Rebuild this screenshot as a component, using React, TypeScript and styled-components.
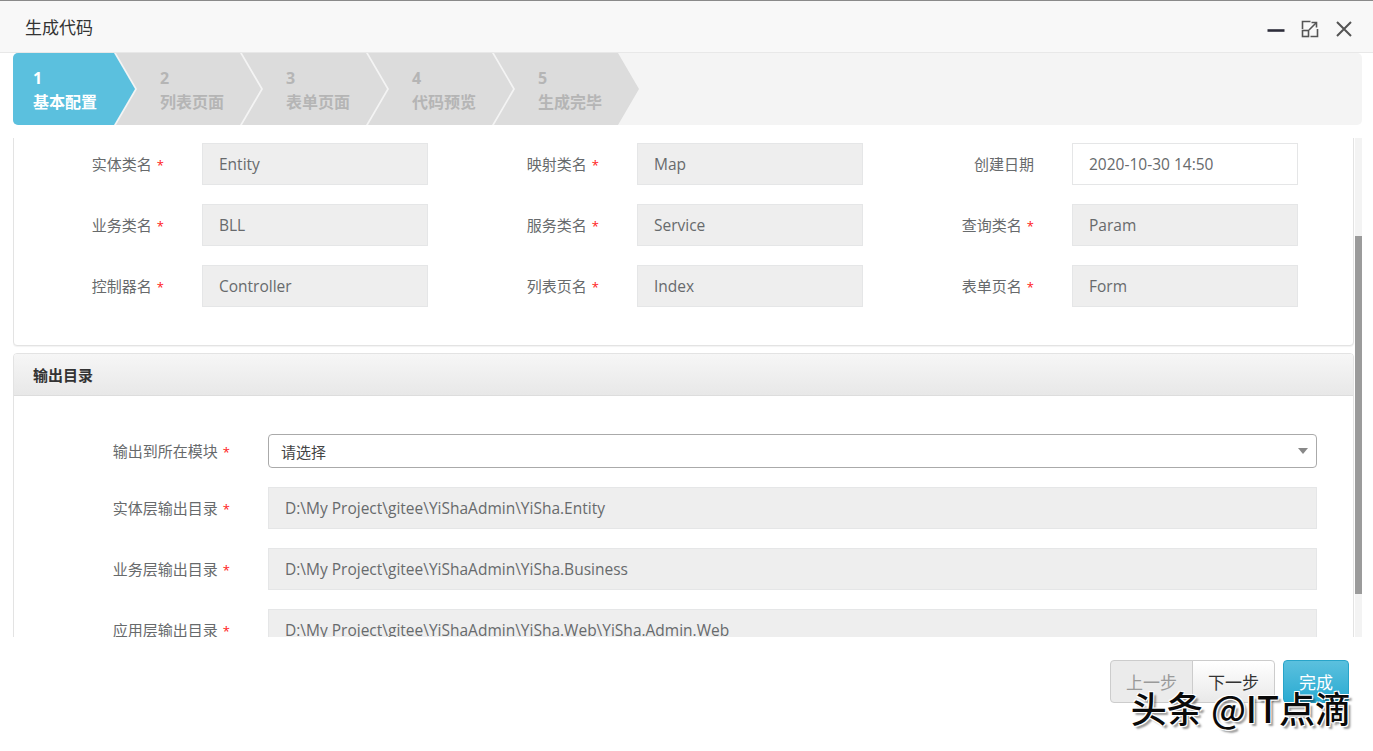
import React, { useLayoutEffect, useRef, useState } from 'react';
import styled, { createGlobalStyle } from 'styled-components';

const GlobalStyle = createGlobalStyle`
  html, body {
    margin: 0;
    padding: 0;
    background: #ffffff;
  }
  body {
    font-family: 'Open Sans', 'Noto Sans CJK SC', sans-serif;
  }
  * {
    box-sizing: border-box;
  }
`;

type Field = { label: string; value: string; required?: boolean; editable?: boolean };

const hiddenRow: Field[] = [
  { label: '数据表名', value: 'SysDemo', required: true },
  { label: '表描述', value: '示例' },
  { label: '创建人', value: 'admin' }
];

const baseRows: Field[][] = [
  [
    { label: '实体类名', value: 'Entity', required: true },
    { label: '映射类名', value: 'Map', required: true },
    { label: '创建日期', value: '2020-10-30 14:50', editable: true }
  ],
  [
    { label: '业务类名', value: 'BLL', required: true },
    { label: '服务类名', value: 'Service', required: true },
    { label: '查询类名', value: 'Param', required: true }
  ],
  [
    { label: '控制器名', value: 'Controller', required: true },
    { label: '列表页名', value: 'Index', required: true },
    { label: '表单页名', value: 'Form', required: true }
  ]
];

const outputDirs = [
  { label: '实体层输出目录', value: 'D:\\My Project\\gitee\\YiShaAdmin\\YiSha.Entity' },
  { label: '业务层输出目录', value: 'D:\\My Project\\gitee\\YiShaAdmin\\YiSha.Business' },
  { label: '应用层输出目录', value: 'D:\\My Project\\gitee\\YiShaAdmin\\YiSha.Web\\YiSha.Admin.Web' }
];

const steps = ['基本配置', '列表页面', '表单页面', '代码预览', '生成完毕'];

const App: React.FC = () => {
  const viewportRef = useRef<HTMLDivElement>(null);
  const anchorRef = useRef<HTMLDivElement>(null);
  const [thumb, setThumb] = useState({ top: 0, height: 0 });

  useLayoutEffect(() => {
    const v = viewportRef.current;
    const a = anchorRef.current;
    if (!v || !a) return;
    v.scrollTop = a.offsetTop - 5;
    const track = v.clientHeight;
    setThumb({
      top: (v.scrollTop / v.scrollHeight) * track,
      height: (v.clientHeight / v.scrollHeight) * track
    });
  }, []);

  const renderField = (f: Field, i: number) => (
    <FieldCell key={i}>
      <Label>
        {f.label}
        {f.required && <Star>*</Star>}
      </Label>
      <TextBox $editable={f.editable}>{f.value}</TextBox>
    </FieldCell>
  );

  return (
    <>
      <GlobalStyle />
      <Dialog>
        <TitleBar>
          <Title>生成代码</Title>
          <WindowTools>
            <ToolButton>
              <svg width="18" height="18" viewBox="0 0 18 18">
                <path d="M0.5 10.5h17" stroke="#2d2d3a" strokeWidth="2.6" />
              </svg>
            </ToolButton>
            <ToolButton>
              <svg width="18" height="18" viewBox="0 0 18 18" fill="none" stroke="#555" strokeWidth="1.6">
                <path d="M1.5 9V1.5h8" />
                <path d="M16.5 9v7.5h-7" />
                <rect x="1.5" y="10.5" width="6" height="6" />
                <path d="M8 10L15.5 2.5" />
                <path d="M10.5 2.5h5v5" />
              </svg>
            </ToolButton>
            <ToolButton>
              <svg width="18" height="18" viewBox="0 0 18 18" fill="none" stroke="#555" strokeWidth="2">
                <path d="M2 2l14 14M16 2L2 16" />
              </svg>
            </ToolButton>
          </WindowTools>
        </TitleBar>

        <StepBar>
          {steps.map((s, i) => (
            <Step key={s} $first={i === 0} $active={i === 0}>
              <StepNo>{i + 1}</StepNo>
              <StepName>{s}</StepName>
            </Step>
          ))}
        </StepBar>

        <ScrollArea>
          <Viewport ref={viewportRef}>
            <Panel>
              <PanelHeader>基本信息</PanelHeader>
              <PanelBody>
                <FieldGrid>
                  {hiddenRow.map(renderField)}
                </FieldGrid>
                {baseRows.map((row, r) => (
                  <FieldGrid key={r} ref={r === 0 ? anchorRef : undefined}>
                    {row.map(renderField)}
                  </FieldGrid>
                ))}
              </PanelBody>
            </Panel>

            <Panel>
              <PanelHeader>输出目录</PanelHeader>
              <PanelBody>
                <WideRow>
                  <Label>
                    输出到所在模块<Star>*</Star>
                  </Label>
                  <SelectBox>
                    <span>请选择</span>
                    <Caret />
                  </SelectBox>
                </WideRow>
                {outputDirs.map(d => (
                  <WideRow key={d.label}>
                    <Label>
                      {d.label}
                      <Star>*</Star>
                    </Label>
                    <TextBox>{d.value}</TextBox>
                  </WideRow>
                ))}
              </PanelBody>
            </Panel>
          </Viewport>
          <Track>
            <Thumb style={{ marginTop: thumb.top, height: thumb.height }} />
          </Track>
        </ScrollArea>

        <Footer>
          <ButtonGroup>
            <Button $variant="disabled" $side="left">上一步</Button>
            <Button $variant="default" $side="right">下一步</Button>
          </ButtonGroup>
          <Button $variant="primary">完成</Button>
        </Footer>

        <Watermark>头条 @IT点滴</Watermark>
      </Dialog>
    </>
  );
};

const Dialog = styled.div`
  position: relative;
  width: 1373px;
  height: 751px;
  display: flex;
  flex-direction: column;
  border-top: 1px solid #8a8a8a;
  background: #ffffff;
  overflow: hidden;
`;

const TitleBar = styled.div`
  height: 52px;
  flex: none;
  display: flex;
  align-items: center;
  justify-content: space-between;
  padding: 0 20px 0 25px;
  background: #f8f8f8;
  border-bottom: 1px solid #e8e8e8;
`;

const Title = styled.div`
  font-size: 17px;
  color: #333333;
`;

const WindowTools = styled.div`
  display: flex;
  align-items: center;
  gap: 16px;
  padding-top: 4px;
`;

const ToolButton = styled.span`
  display: flex;
  width: 18px;
  height: 18px;
`;

const StepBar = styled.div`
  flex: none;
  height: 72px;
  margin: 0 11px 0 13px;
  display: flex;
  background: #f4f4f4;
  border-radius: 5px;
`;

const Step = styled.div<{ $first?: boolean; $active?: boolean }>`
  flex: none;
  width: ${p => (p.$first ? 122 : 145)}px;
  margin-left: ${p => (p.$first ? 0 : -19)}px;
  padding-left: ${p => (p.$first ? 20 : 44)}px;
  padding-top: 2px;
  height: 100%;
  display: flex;
  flex-direction: column;
  justify-content: center;
  background: ${p => (p.$active ? '#5bc0de' : '#dcdcdc')};
  color: ${p => (p.$active ? '#ffffff' : '#b5b5b5')};
  border-radius: ${p => (p.$first ? '5px 0 0 5px' : '0')};
  clip-path: ${p =>
    p.$first
      ? 'polygon(0 0, calc(100% - 21px) 0, 100% 50%, calc(100% - 21px) 100%, 0 100%)'
      : 'polygon(0 0, calc(100% - 21px) 0, 100% 50%, calc(100% - 21px) 100%, 0 100%, 21px 50%)'};
  font-weight: 700;
  font-size: 16px;
  line-height: 24px;
`;

const StepNo = styled.div``;

const StepName = styled.div`
  white-space: nowrap;
`;

const ScrollArea = styled.div`
  flex: none;
  height: 499px;
  margin: 13px 11px 0 13px;
  display: flex;
`;

const Viewport = styled.div`
  position: relative;
  flex: 1;
  overflow: hidden;
  padding-right: 1px;
`;

const Track = styled.div`
  width: 7px;
  flex: none;
  background: #f3f3f3;
`;

const Thumb = styled.div`
  width: 100%;
  background: #9b9b9b;
`;

const Panel = styled.div`
  background: #ffffff;
  border: 1px solid #e3e3e3;
  border-radius: 4px;
  box-shadow: 0 1px 1px rgba(0, 0, 0, 0.05);
  margin-bottom: 7px;
  overflow: hidden;
`;

const PanelHeader = styled.div`
  height: 42px;
  display: flex;
  align-items: center;
  padding-left: 19px;
  background: linear-gradient(to bottom, #f6f6f6, #e8e8e8);
  border-bottom: 1px solid #dddddd;
  font-size: 15px;
  font-weight: 700;
  color: #333333;
`;

const PanelBody = styled.div`
  display: flex;
  flex-direction: column;
  gap: 19px;
  padding: 38px 36px 38px 0;
`;

const FieldGrid = styled.div`
  display: grid;
  grid-template-columns: repeat(3, 435px);
`;

const FieldCell = styled.div`
  display: grid;
  grid-template-columns: 150px 226px;
  column-gap: 38px;
  align-items: center;
`;

const WideRow = styled.div`
  display: grid;
  grid-template-columns: 216px 1fr;
  column-gap: 38px;
  align-items: center;
`;

const Label = styled.div`
  text-align: right;
  font-size: 15px;
  line-height: 20px;
  color: #676a6c;
  white-space: nowrap;
`;

const Star = styled.span`
  color: #ff2020;
  font-size: 13px;
  margin-left: 5px;
`;

const TextBox = styled.div<{ $editable?: boolean }>`
  height: 42px;
  display: flex;
  align-items: center;
  padding: 0 16px;
  background: ${p => (p.$editable ? '#ffffff' : '#eeeeee')};
  border: 1px solid #e5e6e7;
  font-size: 15.5px;
  color: #676a6c;
  white-space: nowrap;
  overflow: hidden;
`;

const SelectBox = styled.div`
  height: 34px;
  display: flex;
  align-items: center;
  justify-content: space-between;
  padding: 0 8px 0 12px;
  border: 1px solid #aaaaaa;
  border-radius: 4px;
  background: #ffffff;
  font-size: 15px;
  color: #444444;
`;

const Caret = styled.span`
  width: 0;
  height: 0;
  border-left: 5px solid transparent;
  border-right: 5px solid transparent;
  border-top: 6px solid #888888;
`;

const Footer = styled.div`
  flex: 1;
  display: flex;
  justify-content: flex-end;
  align-items: flex-start;
  gap: 8px;
  padding: 23px 24px 0 0;
`;

const ButtonGroup = styled.div`
  display: flex;
`;

const Button = styled.button<{ $variant: 'disabled' | 'default' | 'primary'; $side?: 'left' | 'right' }>`
  height: 43px;
  padding: 0 ${p => (p.$variant === 'primary' ? 15 : 15)}px;
  font-family: 'Open Sans', 'Noto Sans CJK SC', sans-serif;
  font-size: 17px;
  cursor: ${p => (p.$variant === 'disabled' ? 'not-allowed' : 'pointer')};
  border: 1px solid ${p => (p.$variant === 'primary' ? '#28a4c9' : '#cccccc')};
  border-radius: ${p =>
    p.$side === 'left' ? '4px 0 0 4px' : p.$side === 'right' ? '0 4px 4px 0' : '4px'};
  margin-left: ${p => (p.$side === 'right' ? '-1px' : '0')};
  color: ${p => (p.$variant === 'primary' ? '#ffffff' : p.$variant === 'disabled' ? '#9a9a9a' : '#333333')};
  background: ${p =>
    p.$variant === 'primary'
      ? 'linear-gradient(to bottom, #5bc0de, #2aabd2)'
      : p.$variant === 'disabled'
      ? '#ebebeb'
      : 'linear-gradient(to bottom, #ffffff, #e9e9e9)'};
`;

const Watermark = styled.div`
  position: absolute;
  right: 22px;
  bottom: 23px;
  font-family: 'Noto Sans CJK SC', 'Open Sans', sans-serif;
  font-size: 36px;
  font-weight: 500;
  line-height: 42px;
  color: #0a0a0a;
  white-space: nowrap;
  text-shadow: 1px 1px 0 #ffffff, -1px -1px 0 #ffffff, 1px -1px 0 #ffffff, -1px 1px 0 #ffffff,
    3px 3px 2px rgba(0, 0, 0, 0.4);
  pointer-events: none;
`;

export default App;
